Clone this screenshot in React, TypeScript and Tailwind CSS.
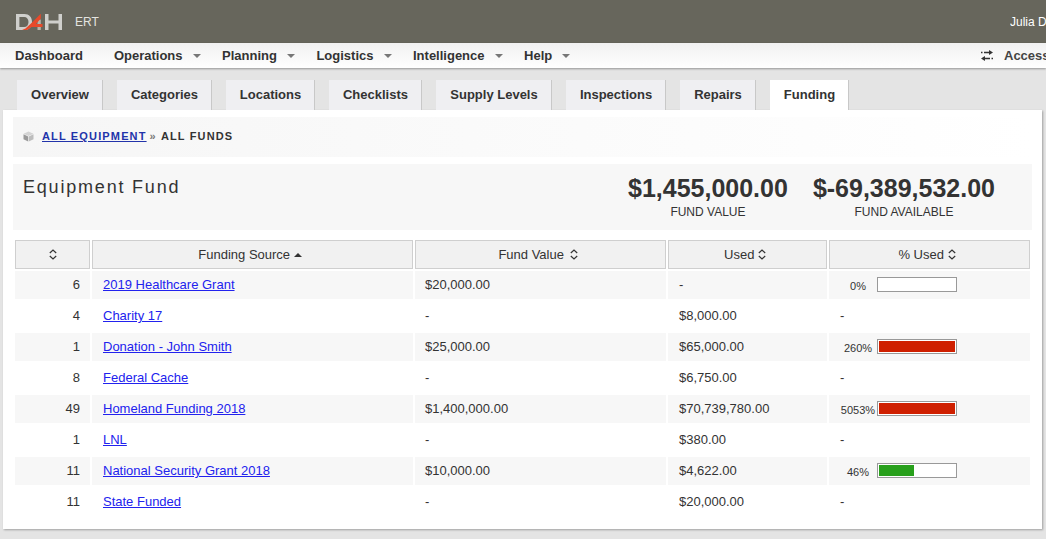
import React from "react";

const navItems = [
  { label: "Operations", caret: true },
  { label: "Planning", caret: true },
  { label: "Logistics", caret: true },
  { label: "Intelligence", caret: true },
  { label: "Help", caret: true },
];

const tabs = [
  { label: "Overview", w: "w-[86px]" },
  { label: "Categories", w: "w-[95px]" },
  { label: "Locations", w: "w-[89px]" },
  { label: "Checklists", w: "w-[93px]" },
  { label: "Supply Levels", w: "w-[116px]" },
  { label: "Inspections", w: "w-[100px]" },
  { label: "Repairs", w: "w-[76px]" },
  { label: "Funding", w: "w-[79px]", active: true },
];

interface Fund {
  count: number;
  name: string;
  value: string;
  used: string;
  pct?: number;
}

const funds: Fund[] = [
  { count: 6, name: "2019 Healthcare Grant", value: "$20,000.00", used: "-", pct: 0 },
  { count: 4, name: "Charity 17", value: "-", used: "$8,000.00" },
  { count: 1, name: "Donation - John Smith", value: "$25,000.00", used: "$65,000.00", pct: 260 },
  { count: 8, name: "Federal Cache", value: "-", used: "$6,750.00" },
  { count: 49, name: "Homeland Funding 2018", value: "$1,400,000.00", used: "$70,739,780.00", pct: 5053 },
  { count: 1, name: "LNL", value: "-", used: "$380.00" },
  { count: 11, name: "National Security Grant 2018", value: "$10,000.00", used: "$4,622.00", pct: 46 },
  { count: 11, name: "State Funded", value: "-", used: "$20,000.00" },
];

function Logo() {
  return (
    <svg width="46" height="18" viewBox="0 0 46 18" className="shrink-0">
      <path d="M0 1h8.500c4.600 0 7.500 3.200 7.500 8s-2.900 8-7.500 8H0V1zm3.400 3v10h4.800c2.600 0 4.300-2 4.300-5s-1.700-5-4.300-5H3.400z" fill="#cfcfcc" />
      <path d="M21.500 6.500V17h3.300V6.500z" fill="#b9b3a8" />
      <path d="M6 17l3.500-1.500 6-5.500 6-6 3-3h.3v4.500L20 11h6.500v3H15.500L11 17H6z" fill="#e8492a" />
      <path d="M29 1h3.500v6.400H42.500V1H46v16h-3.500v-6.600H32.500V17H29V1z" fill="#cfcfcc" />
    </svg>
  );
}

function Caret() {
  return (
    <svg width="8" height="4" viewBox="0 0 8 4" className="ml-[10px] mt-[1px]">
      <path d="M0 0h8L4 4z" fill="#777" />
    </svg>
  );
}

function SwapArrows() {
  return (
    <svg width="12" height="11" viewBox="0 0 12 11" className="shrink-0">
      <path d="M0 2.500h1.500M3 2.500h5.500" stroke="#333" strokeWidth="1.300" fill="none" />
      <path d="M8 0l4 2.500L8 5z" fill="#333" />
      <path d="M12 8.500h-1.500M9 8.500H3.500" stroke="#333" strokeWidth="1.300" fill="none" />
      <path d="M4 6L0 8.500 4 11z" fill="#333" />
    </svg>
  );
}

function Cube() {
  return (
    <svg width="11" height="11" viewBox="0 0 11 11" className="shrink-0">
      <path d="M5.500 0.500l5 2.200-5 2.300-5-2.300z" fill="#d4d4d4" />
      <path d="M0.500 3.200l4.700 2.200v5.200L0.500 8.300z" fill="#9a9a9a" />
      <path d="M10.500 3.200L5.800 5.400v5.200l4.700-2.300z" fill="#bdbdbd" />
    </svg>
  );
}

function SortBoth() {
  return (
    <svg width="8" height="11" viewBox="0 0 8 11" className="inline-block align-[-1px]">
      <path d="M0.800 4L4 1l3.200 3M0.800 7L4 10l3.200-3" stroke="#333" strokeWidth="1.200" fill="none" />
    </svg>
  );
}

function SortAsc() {
  return (
    <svg width="8" height="4" viewBox="0 0 8 4" className="inline-block align-[2px]">
      <path d="M0 4h8L4 0z" fill="#333" />
    </svg>
  );
}

function UsageBar({ pct }: { pct: number }) {
  const over = pct > 100;
  const width = Math.min(pct, 100);
  return (
    <div className="mb-[1px] flex items-center pl-[10px]">
      <span className="mt-[4px] w-[38px] text-center text-[11px]">{pct}%</span>
      <div className="h-[15px] w-[80px] border border-[#999] bg-white p-[1px]">
        <div
          className={over ? "h-full bg-[#cf1f00]" : "h-full bg-[#28a01c]"}
          style={{ width: `${width}%` }}
        />
      </div>
    </div>
  );
}

export default function App() {
  return (
    <div className="h-[539px] w-[1046px] overflow-hidden bg-[#e4e4e4] font-['Liberation_Sans',Arial,sans-serif] text-[13px] text-[#333]">
      {/* Top bar */}
      <header className="flex h-[43px] items-center bg-[#67665c] pl-[16px]">
        <Logo />
        <span className="ml-[13px] text-[12px] text-[#e4e4e0]">ERT</span>
        <div className="ml-auto w-[36px] overflow-hidden whitespace-nowrap text-[12px] text-white">Julia D</div>
      </header>

      {/* Main nav */}
      <nav className="relative flex h-[25px] items-center bg-gradient-to-b from-[#f1f1f1] to-white pl-[15px] font-bold text-[#333] shadow-[0_1px_2px_rgba(0,0,0,0.35)]">
        <span className="mr-[31px]">Dashboard</span>
        <div className="flex items-center gap-[21.5px]">
          {navItems.map((item) => (
            <div key={item.label} className="flex items-center">
              <span>{item.label}</span>
              {item.caret && <Caret />}
            </div>
          ))}
        </div>
        <div className="ml-auto flex w-[65px] items-center overflow-hidden whitespace-nowrap">
          <SwapArrows />
          <span className="ml-[11px] text-[#444]">Access</span>
        </div>
      </nav>

      {/* Tabs */}
      <div className="mt-[12px] flex h-[30px] gap-[14px] pl-[17px]">
        {tabs.map((tab) => (
          <div
            key={tab.label}
            className={`${tab.w} flex items-center justify-center font-bold shadow-[inset_-1px_0_0_#c8c8c8] ${
              tab.active ? "bg-white" : "bg-[#efeff2]"
            }`}
          >
            {tab.label}
          </div>
        ))}
      </div>

      {/* Panel */}
      <main className="ml-[3px] h-[419px] w-[1039px] bg-white px-[10px] pt-[7px] shadow-[1px_1px_2px_rgba(0,0,0,0.3)]">
        <div className="flex h-[40px] items-center bg-gradient-to-r from-[#f6f6f6] to-white pb-[1px] pl-[10px] text-[11px] font-bold tracking-[1.15px]">
          <Cube />
          <a href="#" className="ml-[8px] text-[#2233aa] underline">ALL EQUIPMENT</a>
          <span className="ml-[3px] mr-[4px] text-[#777]">»</span>
          <span>ALL FUNDS</span>
        </div>

        <section className="mt-[7px] flex h-[66px] bg-[#f7f7f7]">
          <h1 className="ml-[10px] mt-[13px] text-[18px] leading-[20px] tracking-[1.8px] text-[#333]">Equipment Fund</h1>
          <div className="ml-auto mr-[37px] mt-[10px] flex gap-[25px]">
            <div className="text-center">
              <div className="text-[25px] font-bold leading-[28px]">$1,455,000.00</div>
              <div className="mt-[3px] text-[12px] leading-[14px]">FUND VALUE</div>
            </div>
            <div className="text-center">
              <div className="text-[25px] font-bold leading-[28px]">$-69,389,532.00</div>
              <div className="mt-[3px] text-[12px] leading-[14px]">FUND AVAILABLE</div>
            </div>
          </div>
        </section>

        <table className="mt-[8px] w-[1019px] table-fixed border-separate border-spacing-[2px]">
          <colgroup>
            <col className="w-[75px]" />
            <col className="w-[321px]" />
            <col className="w-[251px]" />
            <col className="w-[159px]" />
            <col className="w-[201px]" />
          </colgroup>
          <thead>
            <tr className="h-[29px]">
              <th className="border border-[#cfcfcf] bg-[#f1f1f1] font-normal"><SortBoth /></th>
              <th className="border border-[#cfcfcf] bg-[#f1f1f1] pr-[5px] font-normal">Funding Source <SortAsc /></th>
              <th className="border border-[#cfcfcf] bg-[#f1f1f1] pr-[5px] font-normal">Fund Value <span className="ml-[2px]"><SortBoth /></span></th>
              <th className="border border-[#cfcfcf] bg-[#f1f1f1] pr-[5px] font-normal">Used <SortBoth /></th>
              <th className="border border-[#cfcfcf] bg-[#f1f1f1] pr-[5px] font-normal">% Used <SortBoth /></th>
            </tr>
          </thead>
          <tbody>
            {funds.map((fund, i) => (
              <tr key={fund.name} className={i % 2 === 0 ? "h-[28px] bg-[#f7f7f7]" : "h-[30px]"}>
                <td className="pr-[10px] text-right">{fund.count}</td>
                <td className="pl-[11px]">
                  <a href="#" className="text-[#2222ee] underline">{fund.name}</a>
                </td>
                <td className="pl-[10px]">{fund.value}</td>
                <td className="pl-[11px]">{fund.used}</td>
                <td className={fund.pct === undefined ? "pl-[11px]" : ""}>
                  {fund.pct === undefined ? "-" : <UsageBar pct={fund.pct} />}
                </td>
              </tr>
            ))}
          </tbody>
        </table>
      </main>
    </div>
  );
}
